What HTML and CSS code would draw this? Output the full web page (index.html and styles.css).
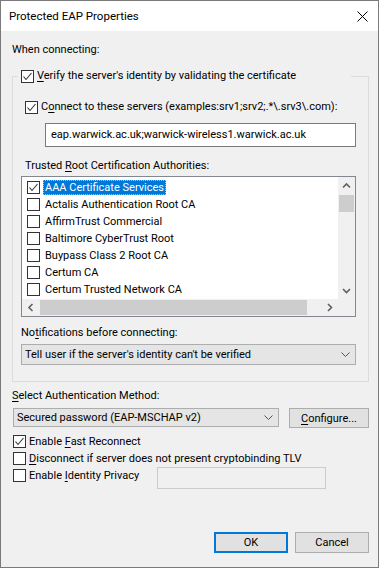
FILE: index.html
```html
<!DOCTYPE html>
<html lang="en">
<head>
  <meta charset="UTF-8" />
  <title>Protected EAP Properties</title>
  <link rel="stylesheet" href="styles.css">
</head>
<body>

<div class="window">
  <!-- Title bar -->
  <div class="titlebar">
    <span class="title">Protected EAP Properties</span>
    <svg class="close" width="11" height="11" viewBox="0 0 11 11">
      <path d="M0.5 0.5 L10.5 10.5 M10.5 0.5 L0.5 10.5" stroke="#000" stroke-width="1" fill="none" />
    </svg>
  </div>

  <div class="content">
    <div class="label when">When connecting:</div>

    <fieldset class="group">
      <legend>
        <span class="check-row">
          <span class="cb"><svg viewBox="0 0 11 11"><polyline points="1.5,5.5 4,8.5 9.5,2" /></svg></span>
          <span><u>V</u>erify the server's identity by validating the certificate</span>
        </span>
      </legend>

      <div class="check-row connect">
        <span class="cb"><svg viewBox="0 0 11 11"><polyline points="1.5,5.5 4,8.5 9.5,2" /></svg></span>
        <span>C<u>o</u>nnect to these servers (examples:srv1;srv2;.*\.srv3\.com):</span>
      </div>

      <div class="textbox servers">eap.warwick.ac.uk;warwick-wireless1.warwick.ac.uk</div>

      <div class="label trusted">Trusted <u>R</u>oot Certification Authorities:</div>

      <div class="listbox">
        <div class="list-main">
          <div class="items">
            <div class="item"><span class="cb"><svg viewBox="0 0 11 11"><polyline points="1.5,5.5 4,8.5 9.5,2" /></svg></span><span class="item-text selected">AAA Certificate Services</span></div>
            <div class="item"><span class="cb"></span><span class="item-text">Actalis Authentication Root CA</span></div>
            <div class="item"><span class="cb"></span><span class="item-text">AffirmTrust Commercial</span></div>
            <div class="item"><span class="cb"></span><span class="item-text">Baltimore CyberTrust Root</span></div>
            <div class="item"><span class="cb"></span><span class="item-text">Buypass Class 2 Root CA</span></div>
            <div class="item"><span class="cb"></span><span class="item-text">Certum CA</span></div>
            <div class="item"><span class="cb"></span><span class="item-text">Certum Trusted Network CA</span></div>
          </div>
          <div class="vscroll">
            <div class="sb-btn">
              <svg width="17" height="17" viewBox="0 0 17 17"><polyline points="5,10.5 8.5,7 12,10.5" /></svg>
            </div>
            <div class="vtrack"><div class="vthumb"></div></div>
            <div class="sb-btn">
              <svg width="17" height="17" viewBox="0 0 17 17"><polyline points="5,7 8.5,10.5 12,7" /></svg>
            </div>
          </div>
        </div>
        <div class="hscroll">
          <div class="sb-btn">
            <svg width="17" height="17" viewBox="0 0 17 17"><polyline points="10.5,5 7,8.5 10.5,12" /></svg>
          </div>
          <div class="htrack"><div class="hthumb"></div></div>
          <div class="sb-btn">
            <svg width="17" height="17" viewBox="0 0 17 17"><polyline points="7,5 10.5,8.5 7,12" /></svg>
          </div>
          <div class="corner"></div>
        </div>
      </div>

      <div class="label notify">No<u>t</u>ifications before connecting:</div>

      <div class="select notify-select">
        <span>Tell user if the server's identity can't be verified</span>
        <svg class="chev" width="9" height="5" viewBox="0 0 9 5"><polyline points="0.5,0.5 4.5,4.5 8.5,0.5" /></svg>
      </div>
    </fieldset>

    <div class="label method-label"><u>S</u>elect Authentication Method:</div>

    <div class="method-row">
      <div class="select method-select">
        <span>Secured password (EAP-MSCHAP v2)</span>
        <svg class="chev" width="9" height="5" viewBox="0 0 9 5"><polyline points="0.5,0.5 4.5,4.5 8.5,0.5" /></svg>
      </div>
      <div class="btn configure"><u>C</u>onfigure...</div>
    </div>

    <div class="check-row option first">
      <span class="cb"><svg viewBox="0 0 11 11"><polyline points="1.5,5.5 4,8.5 9.5,2" /></svg></span>
      <span>Enable <u>F</u>ast Reconnect</span>
    </div>
    <div class="check-row option">
      <span class="cb"></span>
      <span><u>D</u>isconnect if server does not present cryptobinding TLV</span>
    </div>
    <div class="privacy-row">
      <div class="check-row option">
        <span class="cb"></span>
        <span>Enable <u>I</u>dentity Privacy</span>
      </div>
      <div class="textbox disabled"></div>
    </div>

    <div class="footer">
      <div class="btn default">OK</div>
      <div class="btn">Cancel</div>
    </div>
  </div>
</div>

</body>
</html>
```

FILE: styles.css
```css
html, body {
  margin: 0;
  padding: 0;
}

body {
  font-family: "Segoe UI", Roboto, "Noto Sans", sans-serif;
  font-size: 11px;
  color: #000;
  background: #fff;
}

u {
  text-decoration: underline;
  text-underline-offset: 2px;
}

.window {
  width: 379px;
  height: 568px;
  box-sizing: border-box;
  border: 1px solid #7a7a7a;
  background: #f0f0f0;
  display: flex;
  flex-direction: column;
}

/* title bar */
.titlebar {
  height: 30px;
  background: #fff;
  display: flex;
  align-items: center;
  justify-content: space-between;
  padding: 0 10px 0 8px;
}
.title {
  font-size: 11.5px;
}
.close {
  display: block;
  margin-top: 1px;
}

.content {
  flex: 1;
  display: flex;
  flex-direction: column;
  padding: 0 9px 0 11px;
}

.label {
  line-height: 16px;
  height: 16px;
}
.when {
  margin-top: 11px;
}

/* checkbox */
.cb {
  width: 13px;
  height: 13px;
  box-sizing: border-box;
  border: 1px solid #333;
  background: #fff;
  display: inline-block;
  flex: none;
}
.cb svg {
  display: block;
  width: 11px;
  height: 11px;
}
.cb polyline {
  fill: none;
  stroke: #333;
  stroke-width: 1.1;
}
.check-row {
  display: flex;
  align-items: center;
  height: 16px;
  line-height: 16px;
}
.check-row .cb {
  margin-right: 3px;
}

/* group box */
.group {
  margin: 10px 0 0;
  padding: 0 0 16px;
  border: 1px solid #dcdcdc;
  min-width: 0;
}
.group legend {
  margin-left: 5px;
  padding: 0 0 0 3px;
  width: 333px;
  box-sizing: border-box;
  height: 16px;
}

.connect {
  margin: 15px 0 0 12px;
}

.textbox {
  box-sizing: border-box;
  border: 1px solid #7a7a7a;
  background: #fff;
}
.servers {
  margin: 8px 0 0 32px;
  width: 311px;
  height: 24px;
  line-height: 22px;
  padding-left: 5px;
}

.trusted {
  margin: 11px 0 0 12px;
}

/* certificate list */
.listbox {
  margin: 2px 0 0 8px;
  width: 335px;
  height: 141px;
  box-sizing: border-box;
  border: 1px solid #828790;
  background: #fff;
  display: flex;
  flex-direction: column;
}
.list-main {
  display: flex;
  height: 122px;
}
.items {
  flex: 1;
  padding-top: 2px;
  overflow: hidden;
}
.item {
  height: 17px;
  display: flex;
  align-items: center;
  padding-left: 5px;
}
.item .cb {
  margin-right: 3px;
}
.item-text {
  padding: 0 2px;
  line-height: 15px;
  height: 15px;
  white-space: nowrap;
}
.item-text.selected {
  background: #0078d7;
  color: #fff;
  outline: 1px dotted #f7b267;
  outline-offset: -1px;
}

.vscroll {
  width: 17px;
  background: #f0f0f0;
  display: flex;
  flex-direction: column;
}
.sb-btn {
  width: 17px;
  height: 17px;
  flex: none;
}
.sb-btn svg {
  display: block;
}
.sb-btn polyline {
  fill: none;
  stroke: #606060;
  stroke-width: 1.6;
}
.vtrack {
  flex: 1;
  padding: 1px 1px 0 1px;
}
.vthumb {
  height: 17px;
  background: #cdcdcd;
}
.hscroll {
  height: 17px;
  background: #f0f0f0;
  display: flex;
}
.htrack {
  flex: 1;
  padding: 1px 0 1px 1px;
}
.hthumb {
  width: 267px;
  height: 15px;
  background: #cdcdcd;
}
.corner {
  width: 17px;
  background: #f0f0f0;
}

.notify {
  margin: 8px 0 0 8px;
}

/* combo boxes */
.select {
  box-sizing: border-box;
  border: 1px solid #adadad;
  background: #e5e5e5;
  display: flex;
  align-items: center;
  justify-content: space-between;
  padding: 0 5px 0 3px;
}
.chev polyline {
  fill: none;
  stroke: #555;
  stroke-width: 1;
}
.notify-select {
  margin: 3px 0 0 8px;
  width: 335px;
  height: 21px;
}

.method-label {
  margin-top: 6px;
}
.method-row {
  display: flex;
  align-items: flex-start;
  margin-top: 4px;
}
.method-select {
  margin-left: 1px;
  width: 266px;
  height: 19px;
}

/* buttons */
.btn {
  box-sizing: border-box;
  width: 74px;
  height: 21px;
  border: 1px solid #adadad;
  background: #e1e1e1;
  display: flex;
  align-items: center;
  justify-content: center;
}
.configure {
  margin-left: 10px;
  width: 80px;
  height: 20px;
}
.btn.default {
  border: 2px solid #0078d7;
}

.option {
  margin-left: 1px;
  height: 17px;
}
.option.first {
  margin-top: 5px;
}
.privacy-row {
  display: flex;
  align-items: flex-start;
}
.privacy-row .option {
  width: 144px;
  flex: none;
}
.textbox.disabled {
  margin-top: 0;
  width: 169px;
  height: 22px;
  border-color: #cccccc;
  background: #f0f0f0;
}

.footer {
  margin-top: auto;
  margin-bottom: 14px;
  display: flex;
  justify-content: flex-end;
  gap: 7px;
}
```
